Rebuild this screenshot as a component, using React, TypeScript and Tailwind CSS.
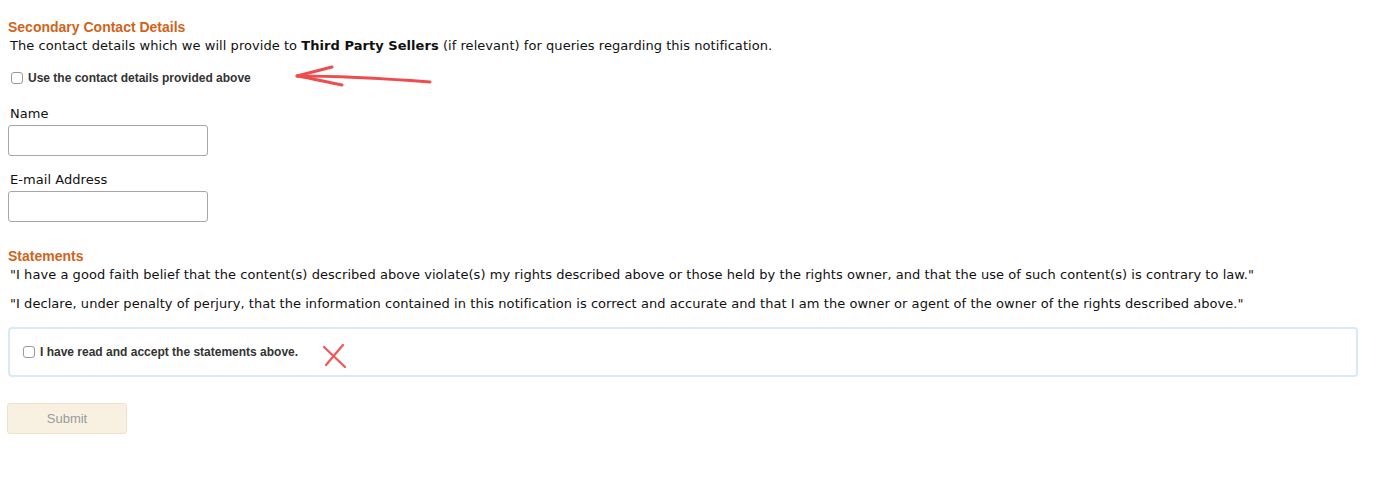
import React from "react";

const verdana = { fontFamily: '"DejaVu Sans", Verdana, sans-serif', letterSpacing: "0.05px" };

function Box() {
  return (
    <input
      type="checkbox"
      className="m-0 h-[12px] w-[12px] shrink-0 appearance-none rounded-[3px] border border-[#9a9a9a] bg-white"
    />
  );
}

export default function App() {
  return (
    <div className="relative min-h-[489px] w-[1385px] bg-white pl-2 pt-[19px] text-[#111]">
      {/* Secondary contact */}
      <h3 className="font-['Liberation_Sans',Arial,sans-serif] text-[14px] font-bold leading-[16px] text-[#d0641a]">
        Secondary Contact Details
      </h3>
      <p className="mt-[2px] pl-[2px] text-[13px] leading-[18px]" style={verdana}>
        The contact details which we will provide to <b>Third Party Sellers</b> (if relevant) for queries regarding this notification.
      </p>
      <label className="mt-[15px] flex items-center gap-[5px] pl-[3px] font-['Liberation_Sans',Arial,sans-serif] text-[12px] font-bold leading-[16px] text-[#333]">
        <Box />
        Use the contact details provided above
      </label>

      <div className="mt-[20px] flex flex-col" style={verdana}>
        <span className="pl-[2px] text-[13px] leading-[16px]">Name</span>
        <input className="mt-[3px] h-[31px] w-[200px] rounded-[3px] border border-[#a6a6a6] bg-white" />
        <span className="mt-[16px] pl-[2px] text-[13px] leading-[16px]">E-mail Address</span>
        <input className="mt-[3px] h-[31px] w-[200px] rounded-[3px] border border-[#a6a6a6] bg-white" />
      </div>

      {/* Statements */}
      <h3 className="mt-[26px] font-['Liberation_Sans',Arial,sans-serif] text-[14px] font-bold leading-[16px] text-[#d0641a]">
        Statements
      </h3>
      <p className="mt-[2px] pl-[2px] text-[13px] leading-[18px]" style={verdana}>
        "I have a good faith belief that the content(s) described above violate(s) my rights described above or those held by the rights owner, and that the use of such content(s) is contrary to law."
      </p>
      <p className="mt-[11px] pl-[2px] text-[13px] leading-[18px]" style={verdana}>
        "I declare, under penalty of perjury, that the information contained in this notification is correct and accurate and that I am the owner or agent of the owner of the rights described above."
      </p>

      <div className="mt-[14px] flex h-[50px] w-[1350px] items-center rounded-[4px] border-2 border-[#d9eaf7] pl-[13px]">
        <label className="flex items-center gap-[5px] font-['Liberation_Sans',Arial,sans-serif] text-[12px] font-bold leading-[16px] text-[#333]">
          <Box />
          I have read and accept the statements above.
        </label>
      </div>

      <button
        disabled
        className="mt-[26px] ml-[-1px] h-[31px] w-[120px] rounded-[3px] border border-[#ede3cc] bg-[#f8f1e2] font-['Liberation_Sans',Arial,sans-serif] text-[13px] text-[#9a9a9a]"
      >
        Submit
      </button>

      {/* red annotations */}
      <svg className="pointer-events-none absolute left-[290px] top-[62px]" width="150" height="32" viewBox="0 0 150 32">
        <g stroke="#ee3a3a" strokeWidth="3" strokeLinecap="round" fill="none" opacity="0.9">
          <path d="M7 14 C 50 14, 100 17, 140 20" />
          <path d="M7 14 L 42 5" />
          <path d="M8 14 C 25 17, 40 21, 52 23" />
        </g>
      </svg>
      <svg className="pointer-events-none absolute left-[318px] top-[340px]" width="34" height="32" viewBox="0 0 34 32">
        <g stroke="#ee3a3a" strokeWidth="2.2" strokeLinecap="round" fill="none" opacity="0.85">
          <path d="M6 7 L 27 27" />
          <path d="M25 5 L 8 25" />
        </g>
      </svg>
    </div>
  );
}
